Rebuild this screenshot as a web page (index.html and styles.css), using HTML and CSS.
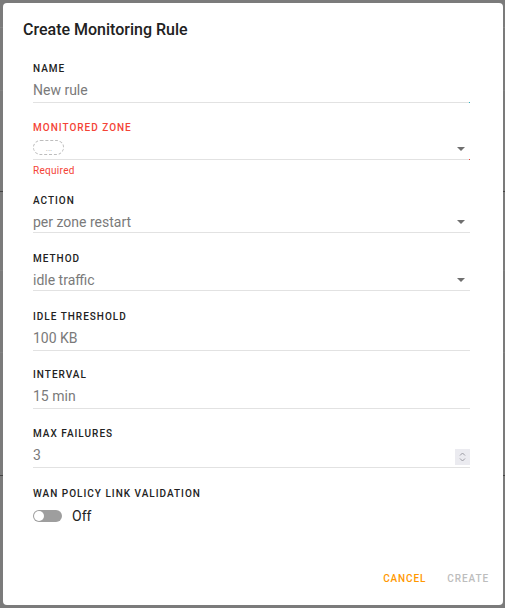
FILE: index.html
```html
<!DOCTYPE html>
<html>
<head>
<meta charset="utf-8">
<link rel="stylesheet" href="styles.css">
</head>
<body>
<div class="dialog">
  <h2 class="title">Create Monitoring Rule</h2>
  <div class="fields">
    <div class="field">
      <div class="label">NAME</div>
      <div class="row focus-dot"><span class="value">New rule</span></div>
    </div>
    <div class="field select error">
      <div class="label">MONITORED ZONE</div>
      <div class="row"><span class="chip">. . .</span><span class="caret"></span></div>
      <div class="helper">Required</div>
    </div>
    <div class="field select">
      <div class="label">ACTION</div>
      <div class="row"><span class="value">per zone restart</span><span class="caret"></span></div>
    </div>
    <div class="field select">
      <div class="label">METHOD</div>
      <div class="row"><span class="value">idle traffic</span><span class="caret"></span></div>
    </div>
    <div class="field">
      <div class="label">IDLE THRESHOLD</div>
      <div class="row"><span class="value">100 KB</span></div>
    </div>
    <div class="field">
      <div class="label">INTERVAL</div>
      <div class="row"><span class="value">15 min</span></div>
    </div>
    <div class="field">
      <div class="label">MAX FAILURES</div>
      <div class="row"><span class="value">3</span>
        <span class="spin"><svg width="15" height="16" viewBox="0 0 15 16"><path d="M5 6.5 L7.5 4 L10 6.5" fill="none" stroke="#9a9aa2" stroke-width="1"/><path d="M5 9.5 L7.5 12 L10 9.5" fill="none" stroke="#9a9aa2" stroke-width="1"/></svg></span>
      </div>
    </div>
    <div class="field toggle-field">
      <div class="label">WAN POLICY LINK VALIDATION</div>
      <div class="toggle-row"><span class="switch"><span class="knob"></span></span><span class="toggle-text">Off</span></div>
    </div>
  </div>
  <div class="actions">
    <span class="btn cancel">CANCEL</span>
    <span class="btn create">CREATE</span>
  </div>
</div>
</body>
</html>
```

FILE: styles.css
```css
html, body {
  margin: 0;
  padding: 0;
}
body {
  width: 505px;
  height: 608px;
  overflow: hidden;
  font-family: Roboto, "Liberation Sans", sans-serif;
  background-color: #7b7b7b;
  background-image:
    linear-gradient(to bottom, transparent 27px, #858585 27px, #858585 28px, transparent 28px),
    linear-gradient(to bottom, transparent 90px, #828282 90px, #828282 91px, transparent 91px),
    linear-gradient(to bottom, transparent 191px, #444 191px, #444 192px, transparent 192px),
    linear-gradient(to bottom, transparent 270px, #828282 270px, #828282 271px, transparent 271px),
    linear-gradient(to bottom, transparent 352px, #828282 352px, #828282 353px, transparent 353px),
    linear-gradient(to bottom, transparent 475px, #444 475px, #444 476px, transparent 476px);
}
.dialog {
  box-sizing: border-box;
  margin: 3px 0 0 3px;
  width: 500px;
  height: 602px;
  background: #fff;
  border-radius: 4px;
  display: flex;
  flex-direction: column;
  padding: 17px 33px 0 20px;
}
.title {
  margin: 0;
  font-size: 16px;
  line-height: 20px;
  font-weight: 500;
  color: #212121;
}
.fields {
  margin-top: 23px;
  padding-left: 10px;
  display: flex;
  flex-direction: column;
}
.field {
  margin-bottom: 18.5px;
}
.field.select {
  margin-bottom: 20px;
}
.field.error {
  margin-bottom: 18px;
}
.field.toggle-field {
  margin-top: 2px;
}
.label {
  font-size: 10px;
  line-height: 12px;
  font-weight: 500;
  letter-spacing: 1px;
  color: #222;
}
.row {
  position: relative;
  display: flex;
  align-items: center;
  height: 20px;
  margin-top: 5px;
  padding-bottom: 2px;
  border-bottom: 1px solid #e2e2e2;
}
.select .row {
  margin-top: 5px;
  padding-bottom: 0;
}
.value {
  flex: 1;
  font-size: 14px;
  line-height: 20px;
  color: #7a7a7a;
}
.focus-dot::after,
.error .row::after {
  content: "";
  position: absolute;
  right: 0;
  bottom: -1px;
  width: 1px;
  height: 1px;
  background: #2bb3c0;
}
.error .row::after {
  background: #f44336;
}
.caret {
  width: 0;
  height: 0;
  margin-right: 5px;
  border-left: 4px solid transparent;
  border-right: 4px solid transparent;
  border-top: 4px solid #6f6f6f;
}
.error .label {
  color: #f44336;
}
.chip {
  box-sizing: border-box;
  flex: none;
  width: 31px;
  height: 15px;
  margin-right: auto;
  margin-top: -2px;
  border: 1px dashed #bdbdbd;
  border-radius: 8px;
  font-size: 8px;
  line-height: 15px;
  color: #aaa;
  text-align: center;
  letter-spacing: -1px;
}
.helper {
  margin-top: 5px;
  font-size: 10px;
  line-height: 12px;
  color: #f44336;
  letter-spacing: 0.3px;
}
.spin {
  display: flex;
  width: 15px;
  height: 16px;
  background: #ebebf0;
  margin-top: 4px;
}
.toggle-row {
  display: flex;
  align-items: center;
  margin-top: 8px;
  height: 16px;
}
.switch {
  position: relative;
  display: inline-block;
  width: 29px;
  height: 12px;
  border-radius: 6px;
  background: #9e9e9e;
}
.knob {
  position: absolute;
  left: 1px;
  top: 1px;
  width: 10px;
  height: 10px;
  border-radius: 50%;
  background: #fff;
}
.toggle-text {
  margin-left: 10px;
  font-size: 14px;
  color: #222;
}
.actions {
  margin-top: auto;
  margin-right: -19px;
  margin-bottom: 20px;
  display: flex;
  justify-content: flex-end;
  gap: 21px;
}
.btn {
  font-size: 10px;
  line-height: 12px;
  font-weight: 500;
  letter-spacing: 0.9px;
}
.cancel { color: #ff9800; }
.create { color: #bdbdbd; }
```
